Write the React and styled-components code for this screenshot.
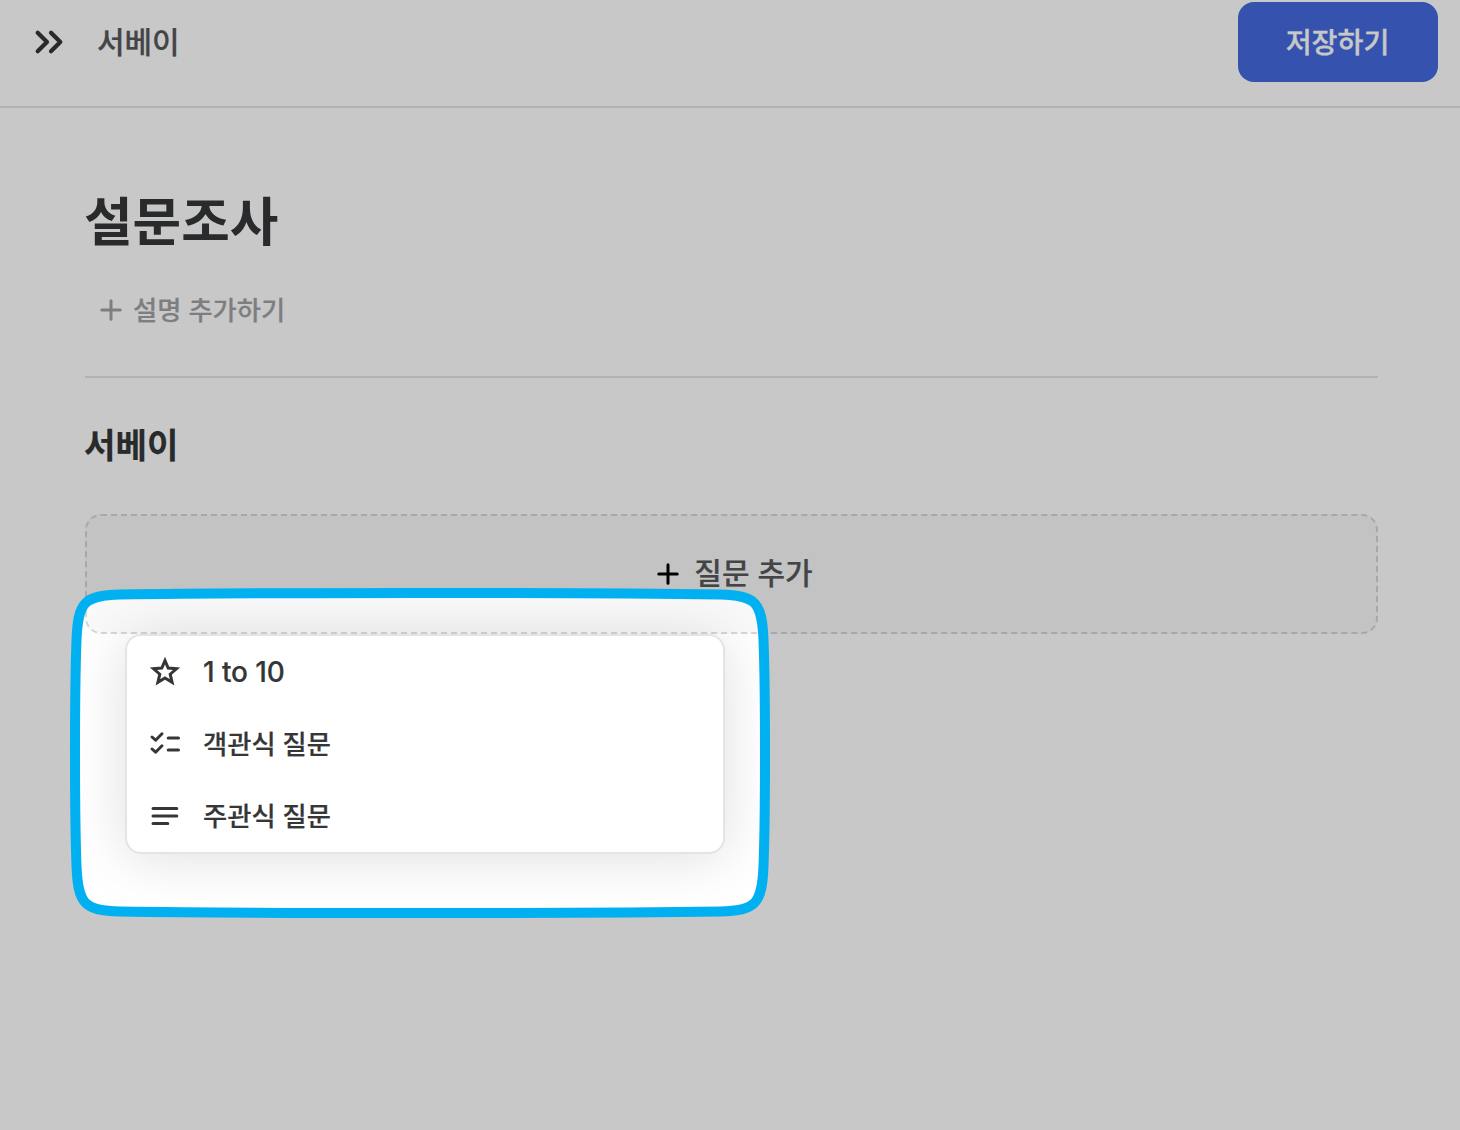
import styled, { createGlobalStyle } from "styled-components";

const GlobalStyle = createGlobalStyle`
  * {
    box-sizing: border-box;
  }

  body {
    margin: 0;
    background: #fff;
    font-family: Inter, "Noto Sans CJK KR", sans-serif;
    color: #343637;
  }
`;

const Page = styled.div`
  position: relative;
  height: 1130px;
  overflow: hidden;
`;

const Header = styled.header`
  display: flex;
  align-items: center;
  height: 108px;
  padding: 0 22px 22px 30px;
  border-bottom: 2px solid #e3e3e3;
`;

const HeaderTitle = styled.span`
  flex: 1;
  margin-left: 31px;
  padding-bottom: 1px;
  font-size: 30px;
  line-height: 40px;
  font-weight: 500;
  -webkit-text-stroke: 0.2px;
  letter-spacing: -0.1px;
  color: #55575a;
`;

const SaveButton = styled.button`
  width: 200px;
  height: 80px;
  padding: 0 1px 3px 0;
  border: none;
  border-radius: 16px;
  background: #4469de;
  color: #fff;
  font-family: inherit;
  font-size: 28.2px;
  font-weight: 500;
  -webkit-text-stroke: 0.3px;
`;

const Content = styled.main`
  padding: 76px 82px 0 85px;
`;

const Title = styled.h1`
  margin: 0 0 0 -1px;
  font-size: 52.8px;
  line-height: 76px;
  font-weight: 700;
`;

const AddDescription = styled.div`
  display: flex;
  align-items: center;
  gap: 8px;
  height: 52px;
  margin-top: 24px;
  padding-left: 12px;
  font-size: 26.3px;
  font-weight: 500;
  -webkit-text-stroke: 0.2px;
  color: #a0a1a6;
`;

const Divider = styled.hr`
  margin: 40px 0 0;
  border: none;
  border-top: 2px solid #e3e3e3;
`;

const SectionTitle = styled.h2`
  margin: 43px 0 0 -1px;
  font-size: 34.2px;
  line-height: 50px;
  font-weight: 700;
  -webkit-text-stroke: 0.2px;
`;

const AddQuestion = styled.div`
  display: flex;
  align-items: center;
  justify-content: center;
  gap: 12px;
  height: 120px;
  margin-top: 43px;
  padding-left: 4px;
  border: 2px dashed #d6d6d6;
  border-radius: 16px;
  background: #f9f9f9;
  font-size: 30px;
  font-weight: 500;
  -webkit-text-stroke: 0.2px;
  color: #55575a;
`;

const Label = styled.span`
  padding-bottom: ${(p) => p.$lift || 0}px;
`;

const Menu = styled.ul`
  position: absolute;
  top: 634px;
  left: 125px;
  width: 600px;
  margin: 0;
  padding: 0;
  list-style: none;
  border: 2px solid #e4e4e4;
  border-radius: 16px;
  background: #fff;
  box-shadow: 0 4px 56px rgba(0, 0, 0, 0.13);
`;

const MenuItem = styled.li`
  display: flex;
  align-items: center;
  gap: 20px;
  height: 72px;
  padding-left: 20px;
  font-size: ${(p) => (p.$latin ? "28px" : "26.3px")};
  letter-spacing: ${(p) => (p.$latin ? "-0.1px" : "normal")};
  font-weight: 500;
  -webkit-text-stroke: 0.2px;
`;

const Icon = styled.svg`
  flex: none;
  fill: none;
  stroke: currentColor;
  stroke-width: ${(p) => p.$weight || 3};
  stroke-linecap: round;
  stroke-linejoin: ${(p) => (p.$sharp ? "miter" : "round")};
`;

const Spotlight = styled.svg`
  position: absolute;
  inset: 0;
  pointer-events: none;
`;

const Chevrons = () => (
  <Icon width="36" height="36" viewBox="0 0 36 36" $weight={4.2}>
    <path d="M7.7 8.7 17 18l-9.3 9.3M21 8.7l9.3 9.3-9.3 9.3" />
  </Icon>
);

const Plus = ({ color }) => (
  <Icon width="28" height="28" viewBox="0 0 28 28" color={color}>
    <path d="M14 4.8v18.4M4.8 14h18.4" />
  </Icon>
);

const Star = () => (
  <Icon width="36" height="36" viewBox="0 0 36 36" $sharp>
    <path d="M18 6.6l3.2 7.5 8.3.7-6.3 5.4 1.9 8.1L18 24l-7.1 4.3 1.9-8.1-6.3-5.4 8.3-.7z" />
  </Icon>
);

const Checklist = () => (
  <Icon width="36" height="36" viewBox="0 0 36 36">
    <path d="M5 11l3.6 3.2 6.4-6.4M5 23l3.6 3.2L15 19.8M21.2 12h10.3M21.2 24h10.3" />
  </Icon>
);

const Lines = () => (
  <Icon width="36" height="36" viewBox="0 0 36 36">
    <path d="M6 10.5h23.8M6 18h23.8M6 25.5h14.8" />
  </Icon>
);

const items = [
  { label: "1 to 10", icon: Star, latin: true },
  { label: "객관식 질문", icon: Checklist },
  { label: "주관식 질문", icon: Lines },
];

const ring =
  "M75 753Q75 680 76.5 640C78 602 84 595.5 120 594.5Q220 593 420 593Q620 593 720 594.5C756 595.5 762 602 763.5 640Q765 680 765 753Q765 826 763.5 866C762 904 756 910.5 720 911.5Q620 913 420 913Q220 913 120 911.5C84 910.5 78 904 76.5 866Q75 826 75 753Z";

const App = () => {
  return (
    <Page>
      <GlobalStyle />
      <Header>
        <Chevrons />
        <HeaderTitle>서베이</HeaderTitle>
        <SaveButton>저장하기</SaveButton>
      </Header>
      <Content>
        <Title>설문조사</Title>
        <AddDescription>
          <Plus />
          <Label $lift={4}>설명 추가하기</Label>
        </AddDescription>
        <Divider />
        <SectionTitle>서베이</SectionTitle>
        <AddQuestion>
          <Plus color="#000" />
          <Label $lift={6}>질문 추가</Label>
        </AddQuestion>
      </Content>
      <Menu>
        {items.map(({ label, icon: ItemIcon, latin }) => (
          <MenuItem key={label} $latin={latin}>
            <ItemIcon />
            <Label $lift={latin ? 0 : 4}>{label}</Label>
          </MenuItem>
        ))}
      </Menu>
      <Spotlight width="1460" height="1130" viewBox="0 0 1460 1130">
        <path
          d={`M0 0H1460V1130H0Z${ring}`}
          fill="#000"
          fillOpacity="0.216"
          fillRule="evenodd"
        />
        <path d={ring} fill="none" stroke="#00b0f0" strokeWidth="10" />
      </Spotlight>
    </Page>
  );
};

export default App;
